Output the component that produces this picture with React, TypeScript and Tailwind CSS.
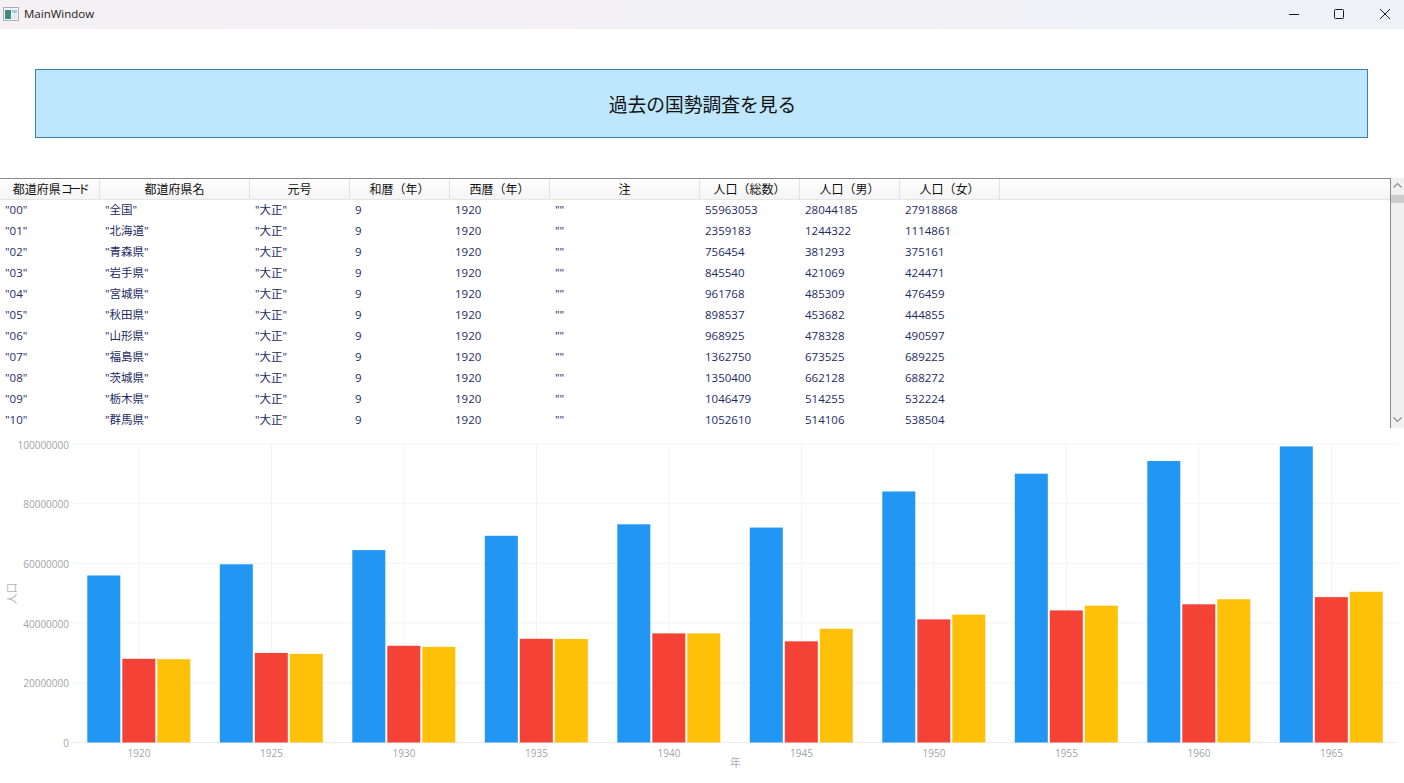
const uiFont = "font-['Open_Sans','Noto_Sans_CJK_JP',sans-serif]";

const headers = ['都道府県', '都道府県名', '元号', '和暦（年）', '西暦（年）', '注', '人口（総数）', '人口（男）', '人口（女）'];

const rows = [
  ['"00"', '"全国"', '55963053', '28044185', '27918868'],
  ['"01"', '"北海道"', '2359183', '1244322', '1114861'],
  ['"02"', '"青森県"', '756454', '381293', '375161'],
  ['"03"', '"岩手県"', '845540', '421069', '424471'],
  ['"04"', '"宮城県"', '961768', '485309', '476459'],
  ['"05"', '"秋田県"', '898537', '453682', '444855'],
  ['"06"', '"山形県"', '968925', '478328', '490597'],
  ['"07"', '"福島県"', '1362750', '673525', '689225'],
  ['"08"', '"茨城県"', '1350400', '662128', '688272'],
  ['"09"', '"栃木県"', '1046479', '514255', '532224'],
  ['"10"', '"群馬県"', '1052610', '514106', '538504'],
];

const census = [
  { year: 1920, total: 55.96, male: 28.04, female: 27.92 },
  { year: 1925, total: 59.7, male: 30.0, female: 29.7 },
  { year: 1930, total: 64.45, male: 32.4, female: 32.05 },
  { year: 1935, total: 69.25, male: 34.75, female: 34.7 },
  { year: 1940, total: 73.1, male: 36.55, female: 36.55 },
  { year: 1945, total: 72.0, male: 33.9, female: 38.1 },
  { year: 1950, total: 84.1, male: 41.25, female: 42.85 },
  { year: 1955, total: 90.05, male: 44.25, female: 45.85 },
  { year: 1960, total: 94.3, male: 46.3, female: 48.0 },
  { year: 1965, total: 99.2, male: 48.7, female: 50.5 },
];

const zeroY = 742.5;
const scale = 2.985; // px per million
const ticks = [0, 20, 40, 60, 80, 100];

function Chart() {
  return (
    <svg viewBox="0 428 1404 355" className="block w-full h-[355px]" style={{ fontFamily: "'Open Sans','Noto Sans CJK JP',sans-serif" }}>
      {ticks.map((t) => {
        const y = zeroY - t * scale;
        return (
          <g key={t}>
            <line x1={73} x2={1398} y1={y} y2={y} stroke={t === 0 ? '#ececec' : '#f3f3f3'} />
            <text x={69} y={y + 4.5} textAnchor="end" fontSize={10} fill="#a3a3a3">
              {t === 0 ? '0' : `${t}000000`}
            </text>
          </g>
        );
      })}
      {census.map((c, i) => {
        const cx = 139.3 + i * 132.5;
        return (
          <g key={c.year}>
            <line x1={cx - 0.3} x2={cx - 0.3} y1={444} y2={zeroY} stroke="#f3f3f3" />
            <rect x={cx - 52} y={zeroY - c.total * scale} width={33} height={c.total * scale} fill="#2196f3" />
            <rect x={cx - 17} y={zeroY - c.male * scale} width={33} height={c.male * scale} fill="#f44336" />
            <rect x={cx + 18} y={zeroY - c.female * scale} width={33} height={c.female * scale} fill="#ffc107" />
            <text x={cx - 0.3} y={757} textAnchor="middle" fontSize={10} fill="#a3a3a3">{c.year}</text>
          </g>
        );
      })}
      <text x={735.5} y={766.5} textAnchor="middle" fontSize={11} fill="#adadad">年</text>
      <text transform="translate(15.5 593.5) rotate(-90)" textAnchor="middle" fontSize={11} fill="#b4b4b4">人口</text>
    </svg>
  );
}

function TitleBar() {
  return (
    <div className="h-[29px] pb-px flex items-center bg-gradient-to-r from-[#f4f0f3] to-[#eff1f7]">
      <svg width="16" height="16" viewBox="0 0 16 16" className="ml-[3px]">
        <rect x="0.5" y="1.5" width="15" height="13" fill="#f2f4f6" stroke="#a9b0b6" />
        <rect x="2" y="4" width="6" height="9" fill="#3f8a84" />
        <rect x="9" y="4" width="5" height="3" fill="#9fc7e0" />
        <rect x="9" y="8" width="5" height="5" fill="#e3e8ea" />
      </svg>
      <span className="ml-[5px] text-[11.5px] text-[#1a1a1a]">MainWindow</span>
      <div className="ml-auto flex items-center pb-px">
        <span className="w-[45px] flex justify-center">
          <svg width="10" height="10" viewBox="0 0 10 10"><path d="M0 5.5h10" stroke="#1a1a1a" /></svg>
        </span>
        <span className="w-[46px] flex justify-center">
          <svg width="10" height="10" viewBox="0 0 10 10"><rect x="0.5" y="0.5" width="9" height="9" rx="1" fill="none" stroke="#1a1a1a" /></svg>
        </span>
        <span className="w-[46px] flex justify-center mr-[-4px]">
          <svg width="10" height="10" viewBox="0 0 10 10"><path d="M0 0l10 10M10 0L0 10" stroke="#1a1a1a" /></svg>
        </span>
      </div>
    </div>
  );
}

function DataTable() {
  const colClass = 'grid grid-cols-[100px_150px_100px_100px_100px_150px_100px_100px_100px]';
  return (
    <div className="h-[250px] flex overflow-hidden">
      <div className="w-[1391px] border-t border-r border-[#8a8a8a] overflow-hidden">
        <div className={`${colClass} h-[21px] bg-gradient-to-b from-white to-[#f4f4f4] border-b border-[#e5e5e5]`}>
          {headers.map((h, i) => (
            <div key={i} className="border-r border-[#e2e2e2] text-center text-xs leading-[21px] text-[#111] whitespace-nowrap">
              {h}
              {i === 0 && <span className="tracking-[-3.5px]">コード</span>}
            </div>
          ))}
        </div>
        {rows.map((r) => (
          <div key={r[0]} className={`${colClass} h-[21px] text-[11.5px] leading-[20px] text-[#1d2a66]`}>
            <div className="pl-[5px]">{r[0]}</div>
            <div className="pl-[5px]">{r[1]}</div>
            <div className="pl-[5px]">"大正"</div>
            <div className="pl-[5px]">9</div>
            <div className="pl-[5px]">1920</div>
            <div className="pl-[5px]">""</div>
            <div className="pl-[5px]">{r[2]}</div>
            <div className="pl-[5px]">{r[3]}</div>
            <div className="pl-[5px]">{r[4]}</div>
          </div>
        ))}
      </div>
      <div className="w-[13px] bg-[#f0f0f0] flex flex-col items-center">
        <svg width="13" height="17" viewBox="0 0 13 17" className="shrink-0">
          <path d="M2.5 9.5l4-4 4 4" fill="none" stroke="#8c8c8c" strokeWidth="1.2" />
        </svg>
        <div className="w-full h-2 bg-[#cdcdcd]" />
        <svg width="13" height="17" viewBox="0 0 13 17" className="mt-auto shrink-0">
          <path d="M2.5 6.5l4 4 4-4" fill="none" stroke="#8c8c8c" strokeWidth="1.2" />
        </svg>
      </div>
    </div>
  );
}

export default function App() {
  return (
    <div className={`w-[1404px] h-[783px] bg-white overflow-hidden ${uiFont}`}>
      <TitleBar />
      <div className="pt-10 pb-10 pl-[35px] pr-9">
        <button className="w-full h-[69px] pt-[3px] pl-[2px] bg-[#bee6fd] border border-[#3c7fb1] text-[18.75px] text-[#111]">
          過去の国勢調査を見る
        </button>
      </div>
      <DataTable />
      <Chart />
    </div>
  );
}
